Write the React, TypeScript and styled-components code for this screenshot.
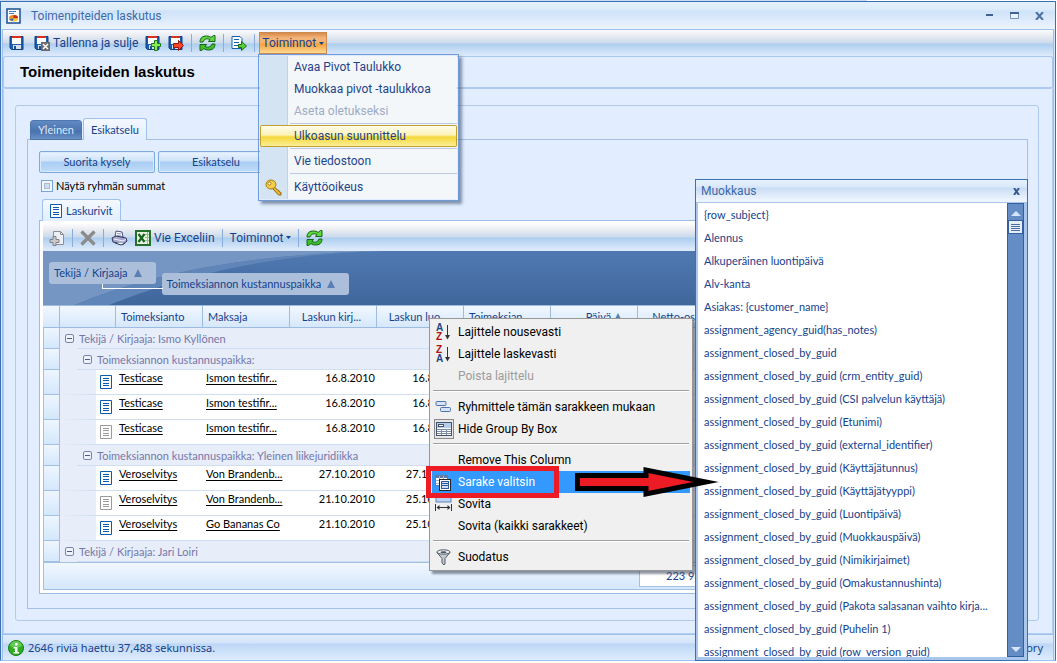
import React from 'react';
import styled, { createGlobalStyle, css } from 'styled-components';

const ui = `Roboto, "Noto Sans", sans-serif`;
const small = `Lato, "DejaVu Sans", sans-serif`;
const navy = '#15428b';

const Global = createGlobalStyle`
  * { box-sizing: border-box; }
  html, body { margin: 0; background: #fff; }
  body { font: 11px/16px ${small}; color: ${navy}; overflow: hidden; }
  button { font: inherit; color: inherit; border: 0; background: none; padding: 0; margin: 0; white-space: nowrap; }
`;

/* ---------- window frame ---------- */

const Desktop = styled.div`
  min-height: 100vh;
  display: flex;
  flex-direction: column;
  padding: 1px 1px 2px 0;
  background: linear-gradient(90deg, #c9dbf0 82%, #fff 82%) 0 0 / 100% 1px no-repeat;
`;

const Frame = styled.div`
  position: relative;
  flex: 1;
  display: flex;
  flex-direction: column;
  border: 1px solid #3b70b2;
  border-bottom-color: #9fc3ee;
  background: #d5e6fb;
`;

const TitleBar = styled.header`
  display: flex;
  align-items: center;
  gap: 10px;
  height: 27px;
  padding: 0 8px 0 5px;
  font: 12px/16px ${ui};
  color: #3e6aaa;
  background: linear-gradient(#e4f1fb 0, #dcebfa 8px, #cfe2f8 9px, #eaf3fe 26px);
`;

const TitleText = styled.span`
  flex: 1;
`;

const WindowButton = styled.button`
  display: flex;
  width: 15px;
  height: 12px;
  align-items: center;
  justify-content: center;
`;

const Shell = styled.div`
  flex: 1;
  display: flex;
  flex-direction: column;
  margin: 0 1px;
  border: 1px solid #9cc0ea;
  border-bottom: 0;
`;

const Bar = styled.div<{ $grid?: boolean }>`
  display: flex;
  align-items: center;
  gap: 7px;
  height: ${p => (p.$grid ? '27px' : '26px')};
  flex-shrink: 0;
  padding: 0 6px;
  font: 12px/16px ${ui};
  background: linear-gradient(#fcfcfd 0, #e8ebf1 6px, #cbdaec 13px, #acceef 14px, #dbe9fb 25px);
`;

const ToolButton = styled.button<{ $label?: boolean }>`
  display: flex;
  align-items: center;
  gap: 3px;
  height: 22px;
  padding-left: ${p => (p.$label ? '2px' : '0')};
`;

const MenuButton = styled.button<{ $open?: boolean }>`
  display: flex;
  align-items: center;
  gap: 3px;
  height: 22px;
  ${p =>
    p.$open &&
    css`
      margin-left: -3px;
      padding: 0 2px;
      border: 1px solid #c98a52;
      background: linear-gradient(#d98a48 0, #f3b47a 5px, #f6b36c 10px, #f5a13e 11px, #fdd994 20px);
    `}
`;

const Divider = styled.span`
  width: 1px;
  height: 18px;
  background: #8aaedb;
`;

const Heading = styled.div`
  height: 33px;
  padding: 0 16px;
  border: 1px solid #a9c8ee;
  border-bottom: 2px solid #adcbf0;
  border-radius: 3px;
  background: #e2eeff;

  h1 {
    margin: 0;
    font: bold 15px/30px "Liberation Sans", Arial, sans-serif;
    color: #000;
  }
`;

const Body = styled.main`
  flex: 1;
  display: flex;
  padding: 16px 13px 12px 11px;
  border: 1px solid #b3cef0;
  border-top: 0;
  background: #e2eeff;
`;

const Section = styled.section`
  flex: 1;
  min-width: 0;
  display: flex;
  flex-direction: column;
  padding: 12px 10px 11px 11px;
  border: 1px solid #b0cbed;
  border-radius: 3px;
`;

const Tabs = styled.div`
  display: flex;
  align-items: flex-end;
  gap: 1px;
  padding-left: 3px;
  margin-bottom: -1px;
  z-index: 1;
`;

const Tab = styled.button<{ $active?: boolean }>`
  display: flex;
  align-items: center;
  gap: 4px;
  padding: 0 7px;
  border: 1px solid #9fc1ea;
  border-radius: 3px 3px 0 0;
  ${p =>
    p.$active
      ? css`
          height: 22px;
          border-bottom: 0;
          background: linear-gradient(#f4f8ff, #e2eeff);
        `
      : css`
          height: 20px;
          color: #dce9fb;
          border-color: #4e77b0;
          background: linear-gradient(#6189c2, #4a72ad 60%, #6b91c6);
        `}
`;

const Pane = styled.div`
  flex: 1;
  display: flex;
  flex-direction: column;
  padding: 11px 11px 14px;
  border: 1px solid #a3c1e8;
`;

const Actions = styled.div`
  display: flex;
  gap: 3px;
`;

const ActionButton = styled.button`
  width: 116px;
  height: 22px;
  border: 1px solid #7faade;
  border-radius: 2px;
  background: linear-gradient(#e9f3fe 0, #cfe3f9 9px, #a9cdf3 10px, #c0dcf8 20px);
  box-shadow: inset 0 0 0 1px #d9eafd;
`;

const Check = styled.label`
  display: flex;
  align-items: center;
  gap: 3px;
  height: 16px;
  margin: 5px 0 5px 2px;
  color: #000;

  input {
    appearance: none;
    width: 12px;
    height: 12px;
    margin: 0;
    border: 1px solid #7ba3d6;
    background: #cfdcf0;
    box-shadow: inset 0 0 0 2px #f2f7fe, inset 0 0 0 3px #a8bcd8;
  }
`;

/* ---------- grid ---------- */

const GridBox = styled.div`
  flex: 1;
  display: flex;
  flex-direction: column;
  padding: 3px;
  border: 1px solid #9cbde8;
  background: #fff;
`;

const GroupPanel = styled.div`
  position: relative;
  display: flex;
  align-items: flex-start;
  gap: 6px;
  height: 54px;
  padding: 11px 6px;
  background: linear-gradient(#5079b2, #40679c);
`;

const Swoosh = styled.svg`
  position: absolute;
  left: 0;
  top: 0;
`;

const Chip = styled.button<{ $nested?: boolean }>`
  position: relative;
  display: flex;
  align-items: center;
  gap: 6px;
  height: 22px;
  padding: 0 14px 0 5px;
  border-radius: 3px;
  background: #abbfdb;
  margin-top: ${p => (p.$nested ? '11px' : '0')};

  ${p =>
    p.$nested &&
    css`
      &::before {
        content: '';
        position: absolute;
        left: -60px;
        top: 11px;
        width: 60px;
        height: 4px;
        border: solid #fff;
        border-width: 0 0 1px 1px;
      }
    `}
`;

const Table = styled.table`
  width: 100%;
  table-layout: fixed;
  border-collapse: separate;
  border-spacing: 0;
`;

const Th = styled.th<{ $right?: boolean }>`
  height: 23px;
  padding: 0 ${p => (p.$right ? '15px' : '5px')} 0 5px;
  border: solid #9ebbe0;
  border-width: 1px 1px 1px 0;
  font-weight: normal;
  text-align: ${p => (p.$right ? 'right' : 'left')};
  white-space: nowrap;
  overflow: hidden;
  text-overflow: ellipsis;
  background: linear-gradient(#f1f7ff, #d6e8fb);
`;

const Selector = styled.td`
  padding: 0;
  border: solid #a3bfe2;
  border-width: 0 1px 1px 1px;
  background: linear-gradient(#eef6ff, #d4e7fb);
`;

const GroupCell = styled.td<{ $level: number }>`
  height: 21px;
  padding: 0 0 0 ${p => (p.$level ? '23px' : '5px')};
  color: #7478ab;
  background: linear-gradient(#cfdff1, #cfdff1) 17px 100% / 100% 1px no-repeat #e7edf9;

  span {
    display: flex;
    align-items: center;
    gap: 5px;
  }
`;

const Cell = styled.td<{ $right?: boolean }>`
  height: 25px;
  padding: 0 ${p => (p.$right ? '2px' : '0')} 0 3px;
  vertical-align: top;
  text-align: ${p => (p.$right ? 'right' : 'left')};
  border-bottom: 1px solid #cfdff1;
  background: #fff;
  color: #000;
  white-space: nowrap;

  a { color: #000; text-underline-offset: 2px; }
`;

const IconCell = styled(Cell)`
  padding: 5px 0 0 4px;
  border-left: 36px solid #e7edf9;
  line-height: 0;
`;

const Footer = styled.div`
  display: flex;
  align-items: center;
  height: 28px;
  border: 1px solid #a3bfe2;
  background: linear-gradient(#f1f7ff, #d4e7fb);
`;

const Total = styled.output`
  width: 87px;
  height: 22px;
  margin-left: 595px;
  padding: 2px 0 0 26px;
  white-space: nowrap;
  border: 1px solid #a3bfe2;
  background: #fff;
`;

const Status = styled.footer`
  display: flex;
  align-items: center;
  gap: 4px;
  height: 26px;
  padding: 0 10px 0 5px;
  font: 11px/16px "Noto Sans", sans-serif;
  border-top: 1px solid #9cc0ea;
  background: linear-gradient(#e1edfc 0, #d3e4f9 8px, #bdd6f5 9px, #dcebfd 24px);

  span:last-child { margin-left: auto; }
`;

/* ---------- floating parts ---------- */

const DropMenu = styled.div`
  position: absolute;
  left: 257px;
  top: 52px;
  width: 201px;
  padding: 1px;
  border: 1px solid #6f9bd9;
  font: 12px/16px ${ui};
  color: #1e4489;
  background: linear-gradient(90deg, #d5e4f3 27px, #c3d2e6 27px, #c3d2e6 28px, #f4f7fa 28px) content-box #fff;
  box-shadow: 3px 3px 3px rgba(60, 80, 110, 0.6);
  z-index: 3;
`;

const DropItem = styled.button<{ $on?: boolean; $tall?: boolean }>`
  display: flex;
  align-items: center;
  width: 100%;
  height: ${p => (p.$tall ? '24px' : '22px')};
  border-radius: 2px;
  &:disabled { color: #9eacc4; }
  ${p =>
    p.$on &&
    css`
      box-shadow: inset 0 0 0 1px #c3a02e;
      background: linear-gradient(#fffdf0 0, #fdf3b8 10px, #f4d838 12px, #fbee98 21px);
    `}
`;

const Slot = styled.span<{ $w: number }>`
  display: flex;
  align-items: center;
  justify-content: center;
  width: ${p => p.$w}px;
  flex-shrink: 0;
`;

const DropLine = styled.hr`
  height: 1px;
  margin: 1px 0 1px 30px;
  border: 0;
  background: #bccbe0;
`;

const ContextMenu = styled.div`
  position: absolute;
  left: 428px;
  top: 316px;
  width: 264px;
  padding: 2px;
  border: 1px solid #979797;
  font: 12px/16px ${ui};
  color: #000;
  background: #f0f0f0;
  box-shadow: 3px 3px 2px rgba(70, 80, 100, 0.6);
  z-index: 3;
`;

const ContextItem = styled.button<{ $on?: boolean }>`
  display: flex;
  align-items: center;
  gap: 3px;
  width: 100%;
  height: 22px;
  &:disabled { color: #9c9c9c; }
  ${p => p.$on && css` color: #fff; background: #3399ff; `}
`;

const ContextLine = styled.hr`
  height: 2px;
  margin: 3px 1px 4px;
  border: solid;
  border-width: 1px 0;
  border-color: #a0a0a0 #fff #fff;
`;

const Callout = styled.div`
  position: absolute;
  left: 425px;
  top: 464px;
  width: 133px;
  height: 32px;
  border: 5px solid #ed1c24;
  pointer-events: none;
  z-index: 5;
`;

const Arrow = styled.svg`
  position: absolute;
  left: 572px;
  top: 463px;
  z-index: 6;
  pointer-events: none;
`;

const Palette = styled.aside`
  position: absolute;
  right: 27px;
  top: 177px;
  bottom: -1px;
  width: 333px;
  display: flex;
  flex-direction: column;
  border: 1px solid #3b70b2;
  background: #a9c6ec;
  z-index: 4;
`;

const PaletteTitle = styled.div`
  display: flex;
  align-items: center;
  justify-content: space-between;
  height: 22px;
  flex-shrink: 0;
  padding: 0 7px 0 5px;
  font: 12px/16px ${ui};
  color: #3e6aaa;
  background: linear-gradient(#e6f2fc 0, #d9e8f9 7px, #c9ddf5 8px, #ecf4fe 20px);
`;

const PaletteBody = styled.div`
  flex: 1;
  min-height: 0;
  display: flex;
  margin: 1px 3px 3px 2px;
  background: #fff;
`;

const Fields = styled.ul`
  flex: 1;
  min-width: 0;
  height: 100%;
  margin: 0;
  padding: 4px 6px 0;
  list-style: none;
  overflow: hidden;

  li {
    height: 23px;
    line-height: 15px;
    white-space: nowrap;
  }
`;

const Scroll = styled.div`
  display: flex;
  flex-direction: column;
  align-items: center;
  width: 17px;
  border: 1px solid #34609f;
  background: #648dc6;

  button { height: 16px; }
  i {
    width: 15px;
    height: 14px;
    margin-bottom: auto;
    border: 1px solid #34609f;
    background: repeating-linear-gradient(#4b6f9f 0 1px, #e8eef6 1px 2px) center / 9px 7px no-repeat #e8eef6;
  }
`;

/* ---------- icons ---------- */

const Floppy = ({ children }: { children?: React.ReactNode }) => (
  <svg width="16" height="16" viewBox="0 0 16 16">
    <path d="M1 1.500h13v13H2.500L1 13z" fill="#1d5fae" stroke="#0d3f86" />
    <rect x="3" y="1" width="9" height="8" fill="#fff" />
    <rect x="3" y="1" width="9" height="2" fill="#d8321e" />
    <rect x="4" y="10" width="8" height="4" fill="#d7dfe8" />
    <rect x="5" y="11" width="2" height="3" fill="#1d4f93" />
    {children}
  </svg>
);
const CloseMark = () => (
  <g>
    <rect x="7" y="7" width="9" height="9" fill="#6c6c6c" />
    <path d="M9 9l5 5M14 9l-5 5" stroke="#fff" strokeWidth="1.6" />
  </g>
);
const PlusMark = () => (
  <path d="M9.500 5.500h3v3h3v3h-3v4h-3v-4h-3v-3h3z" fill="#8ae95a" stroke="#1c7a16" />
);
const ArrowMark = () => (
  <path d="M5.500 8.500h5v-3l5 5-5 5v-3h-5z" fill="#f4472c" stroke="#9c1408" />
);
const Refresh = () => (
  <svg width="17" height="16" viewBox="0 0 17 16">
    <path d="M1 7C1 2.500 4 1 7.500 1c2 0 3.500.5 4.500 1.500L14.500.5h1.500v6H9.500l1.500-2C8 3 5 4 4 7z" fill="#5fd63c" stroke="#14641a" />
    <path d="M16 9c0 4.500-3 6-6.500 6-2 0-3.500-.5-4.500-1.500L2.500 15.500H1v-6h6.500l-1.500 2c3 1.500 6 .5 7-2.500z" fill="#3fbf28" stroke="#14641a" />
  </svg>
);
const Doc = ({ color = '#0d5aae' }: { color?: string }) => (
  <svg width="12" height="14" viewBox="0 0 12 14">
    <path d="M.5.5h11v13H.5z" fill="#fff" stroke={color} />
    <path d="M3 3.500h6M3 5.500h6M3 8.500h6M3 10.500h6" stroke={color} />
  </svg>
);
const Export = () => (
  <svg width="16" height="16" viewBox="0 0 16 16">
    <path d="M1 1.500h8l2 2v10H1z" fill="#fff" stroke="#1560ad" />
    <path d="M3 4.500h5M3 7.500h5M3 10.500h4" stroke="#1560ad" />
    <path d="M7.500 9.500h3v-3l5 4.500-5 4.500v-3h-3z" fill="#57cf35" stroke="#176a12" />
  </svg>
);
const AppIcon = () => (
  <svg width="15" height="16" viewBox="0 0 15 16">
    <path d="M1 1h13v14H1z" fill="#fff" stroke="#1d4f8f" strokeWidth="1.5" />
    <path d="M3 3.500h7M3 5.500h5" stroke="#4a7fbd" />
    <ellipse cx="7.500" cy="10" rx="4.500" ry="3" fill="#f08c1c" />
    <path d="M7.500 10V7a4.500 3 0 0 1 4.500 3z" fill="#c62a1a" />
    <path d="M3 10.500a4.500 3 0 0 0 9 0z" fill="#f8c73a" />
    <path d="M3 11.500a4.500 2.500 0 0 0 4 1.500l.5-3z" fill="#3d6fb8" />
  </svg>
);
const NewGrey = () => (
  <svg width="16" height="16" viewBox="0 0 16 16">
    <path d="M4.500 1.500h7l3 3v10h-10z" fill="#eceff3" stroke="#8c9096" />
    <path d="M11.500 1.500v3h3" fill="none" stroke="#8c9096" />
    <path d="M4 6.500h3v3h3v3H7v3H4v-3H1v-3h3z" fill="#c8cacd" stroke="#808387" />
  </svg>
);
const CrossGrey = () => (
  <svg width="16" height="16" viewBox="0 0 16 16">
    <path d="M1.500 1.500l13 13M14.500 1.500l-13 13" stroke="#8b8b8b" strokeWidth="3.200" />
  </svg>
);
const Printer = () => (
  <svg width="17" height="16" viewBox="0 0 17 16">
    <path d="M4 7l1-6 6 1 1 5z" fill="#fff" stroke="#4b4f80" />
    <path d="M6 3.500l4 .5M6 5.500l4 .5" stroke="#8a8fc0" />
    <path d="M1 8l4-2 10 2 1 3-4 3.500L2 12z" fill="#a5a9cf" stroke="#33365f" />
    <path d="M3 9l9 2 3-2" fill="none" stroke="#f0f1fb" />
    <path d="M4 13l6 2 4-2" fill="#fff" stroke="#33365f" />
  </svg>
);
const Excel = () => (
  <svg width="16" height="16" viewBox="0 0 16 16">
    <rect x="1" y="1" width="14" height="14" fill="#e7f3df" stroke="#23702a" strokeWidth="2" />
    <path d="M10 4.500h4M10 7.500h4M10 10.500h4M12.500 2v12" stroke="#8fc08a" />
    <path d="M3.500 4l6 8M9.500 4l-6 8" stroke="#17651f" strokeWidth="2.200" />
  </svg>
);
const Key = () => (
  <svg width="17" height="17" viewBox="0 0 17 17">
    <path d="M7.500 9.500l6 6.500h2.500v-2.500l-1.500-.5-.5-1.500-1.500-.5L9.500 8z" fill="#eab62a" stroke="#8f6a10" />
    <ellipse cx="6" cy="5.500" rx="5" ry="4.500" fill="#f6cf4a" stroke="#a67b12" />
    <circle cx="4.500" cy="4.500" r="1.500" fill="#fff" stroke="#a67b12" />
  </svg>
);
const Sort = ({ top, bottom, a, b }: { top: string; bottom: string; a: string; b: string }) => (
  <svg width="17" height="18" viewBox="0 0 17 18" fontFamily="Liberation Sans, sans-serif" fontWeight="bold" fontSize="10">
    <text x="1" y="8" fill={a}>{top}</text>
    <text x="1" y="17" fill={b}>{bottom}</text>
    <path d="M12.500 2v13" stroke="#333" />
    <path d="M10 12h5l-2.500 4.500z" fill="#333" />
  </svg>
);
const GroupIcon = () => (
  <svg width="17" height="14" viewBox="0 0 17 14">
    <rect x="1" y="1.500" width="10" height="4" rx="1" fill="#d6e4f5" stroke="#4f75a8" />
    <rect x="5.500" y="7.500" width="10" height="4" rx="1" fill="#d6e4f5" stroke="#4f75a8" />
  </svg>
);
const BoxIcon = () => (
  <svg width="20" height="20" viewBox="0 0 20 20">
    <rect x=".5" y=".5" width="19" height="19" fill="#e6e6e6" stroke="#8a8a8a" />
    <rect x="2.500" y="3.500" width="15" height="13" fill="#fff" stroke="#44546e" />
    <rect x="3" y="4" width="14" height="5" fill="#b8cdea" />
    <rect x="4.500" y="5.500" width="5" height="2" fill="#fff" stroke="#44546e" />
    <path d="M3 10.500h14M3 12.500h14M3 14.500h14M7.500 10v6M12.500 10v6" stroke="#7d8ca6" />
  </svg>
);
const ChooserIcon = () => (
  <svg width="17" height="17" viewBox="0 0 17 17">
    <rect x=".5" y="1.500" width="12" height="10" fill="#fff" stroke="#5f7ba3" />
    <path d="M1 3h12" stroke="#5f7ba3" strokeWidth="2" />
    <path d="M1 6.500h12M1 9.500h12M4.500 2v9M8.500 2v9" stroke="#9db3d2" />
    <rect x="4.500" y="5.500" width="11" height="11" fill="#fff" stroke="#222" />
    <rect x="6.500" y="7.500" width="7" height="7" fill="#cfe0f5" stroke="#2e5c9c" />
    <path d="M7 9.500h6M7 11.500h6" stroke="#2e5c9c" />
  </svg>
);
const FitIcon = () => (
  <svg width="17" height="16" viewBox="0 0 17 16">
    <rect x="1" y="1" width="15" height="5" fill="#bcd2f0" stroke="#5f86bd" />
    <path d="M.5 8v7M16.500 8v7M2 11.500h13" stroke="#333" />
    <path d="M1.500 11.500l3-2.500v5zM15.500 11.500l-3-2.500v5z" fill="#333" />
  </svg>
);
const FilterIcon = () => (
  <svg width="15" height="17" viewBox="0 0 15 17">
    <path d="M1 3.500l5 6v4.500l2 2 1-1V9.500l5-6z" fill="#c3cad3" stroke="#555d66" />
    <ellipse cx="7.500" cy="3" rx="6.500" ry="2.200" fill="#eef1f5" stroke="#555d66" />
    <ellipse cx="7.500" cy="3.200" rx="3" ry="1" fill="#4b535c" />
  </svg>
);
const Minus = () => (
  <svg width="9" height="9" viewBox="0 0 9 9">
    <rect x=".5" y=".5" width="8" height="8" rx="1.500" fill="#eef2fa" stroke="#7a86a8" />
    <path d="M2 4.500h5" stroke="#4f5b85" />
  </svg>
);
const Up = () => (
  <svg width="8" height="8" viewBox="0 0 8 8"><path d="M4 0l4 8H0z" fill="#5b7fb4" /></svg>
);
const Down = () => (
  <svg width="5" height="3" viewBox="0 0 5 3"><path d="M0 0h5L2.500 3z" fill={navy} /></svg>
);
const ScrollArrow = ({ flip }: { flip?: boolean }) => (
  <svg width="10" height="5" viewBox="0 0 10 5"><path d={flip ? 'M0 0h10L5 5z' : 'M0 5h10L5 0z'} fill="#d7e6fa" /></svg>
);
const Info = () => (
  <svg width="16" height="16" viewBox="0 0 16 16">
    <circle cx="8" cy="8" r="7.500" fill="#2fae22" stroke="#15800f" />
    <path d="M2 6a6 5 0 0 1 12 0q-6 3-12 0z" fill="#7bd66c" opacity=".7" />
    <rect x="7" y="3" width="2.500" height="2.500" fill="#fff" />
    <path d="M5.500 7h4v5h1.500v1.500H5.500V12H7V8.500H5.500z" fill="#fff" />
  </svg>
);

/* ---------- data ---------- */

type Entry =
  | { kind: 'group'; level: number; text: string }
  | { kind: 'row'; dim?: boolean; task: string; payer: string; sent: string; made: string };

const entries: Entry[] = [
  { kind: 'group', level: 0, text: 'Tekijä / Kirjaaja: Ismo Kyllönen' },
  { kind: 'group', level: 1, text: 'Toimeksiannon kustannuspaikka:' },
  { kind: 'row', task: 'Testicase', payer: 'Ismon testifir...', sent: '16.8.2010', made: '16.8.2010' },
  { kind: 'row', task: 'Testicase', payer: 'Ismon testifir...', sent: '16.8.2010', made: '16.8.2010' },
  { kind: 'row', dim: true, task: 'Testicase', payer: 'Ismon testifir...', sent: '16.8.2010', made: '16.8.2010' },
  { kind: 'group', level: 1, text: 'Toimeksiannon kustannuspaikka: Yleinen liikejuridiikka' },
  { kind: 'row', task: 'Veroselvitys', payer: 'Von Brandenb...', sent: '27.10.2010', made: '27.10.2010' },
  { kind: 'row', dim: true, task: 'Veroselvitys', payer: 'Von Brandenb...', sent: '21.10.2010', made: '25.10.2010' },
  { kind: 'row', task: 'Veroselvitys', payer: 'Go Bananas Co', sent: '21.10.2010', made: '25.10.2010' },
  { kind: 'group', level: 0, text: 'Tekijä / Kirjaaja: Jari Loiri' },
];

const fields = [
  '{row_subject}', 'Alennus', 'Alkuperäinen luontipäivä', 'Alv-kanta', 'Asiakas: {customer_name}',
  'assignment_agency_guid(has_notes)', 'assignment_closed_by_guid',
  ...['crm_entity_guid', 'CSI palvelun käyttäjä', 'Etunimi', 'external_identifier', 'Käyttäjätunnus',
    'Käyttäjätyyppi', 'Luontipäivä', 'Muokkauspäivä', 'Nimikirjaimet', 'Omakustannushinta',
  ].map(n => `assignment_closed_by_guid (${n})`),
  'assignment_closed_by_guid (Pakota salasanan vaihto kirja...',
  'assignment_closed_by_guid (Puhelin 1)',
  'assignment_closed_by_guid (row_version_guid)',
];

const blue = '#1c4587';
const red = '#b01116';

export default function App() {
  return (
    <Desktop>
      <Global />
      <Frame>
        <TitleBar>
          <AppIcon />
          <TitleText>Toimenpiteiden laskutus</TitleText>
          <WindowButton aria-label="Pienennä">
            <svg width="7" height="3"><path d="M0 1h7" stroke="#3e6296" strokeWidth="2" /></svg>
          </WindowButton>
          <WindowButton aria-label="Suurenna">
            <svg width="9" height="8"><path d="M.5.5h8v6h-8z" fill="#eaf3fe" stroke="#7593be" /><path d="M0 1h9" stroke="#3e6296" strokeWidth="2" /></svg>
          </WindowButton>
          <WindowButton aria-label="Sulje">
            <svg width="9" height="8"><path d="M1 0l7 8M8 0L1 8" stroke="#4c6fa3" strokeWidth="2" /></svg>
          </WindowButton>
        </TitleBar>

        <Shell>
          <Bar role="toolbar">
            <ToolButton aria-label="Tallenna"><Floppy /></ToolButton>
            <ToolButton $label><Floppy><CloseMark /></Floppy>Tallenna ja sulje</ToolButton>
            <ToolButton aria-label="Tallenna ja uusi"><Floppy><PlusMark /></Floppy></ToolButton>
            <ToolButton aria-label="Tallenna ja jatka"><Floppy><ArrowMark /></Floppy></ToolButton>
            <Divider />
            <ToolButton aria-label="Päivitä"><Refresh /></ToolButton>
            <Divider />
            <ToolButton aria-label="Vie"><Export /></ToolButton>
            <Divider />
            <MenuButton $open>Toiminnot<Down /></MenuButton>
          </Bar>

          <Heading><h1>Toimenpiteiden laskutus</h1></Heading>

          <Body>
            <Section>
              <Tabs>
                <Tab>Yleinen</Tab>
                <Tab $active>Esikatselu</Tab>
              </Tabs>
              <Pane>
                <Actions>
                  <ActionButton>Suorita kysely</ActionButton>
                  <ActionButton>Esikatselu</ActionButton>
                </Actions>
                <Check><input type="checkbox" />Näytä ryhmän summat</Check>
                <Tabs>
                  <Tab $active><Doc />Laskurivit</Tab>
                </Tabs>
                <GridBox>
                  <Bar role="toolbar" $grid>
                    <ToolButton aria-label="Uusi"><NewGrey /></ToolButton>
                    <Divider />
                    <ToolButton aria-label="Poista"><CrossGrey /></ToolButton>
                    <Divider />
                    <ToolButton aria-label="Tulosta"><Printer /></ToolButton>
                    <ToolButton><Excel />Vie Exceliin</ToolButton>
                    <Divider />
                    <MenuButton>Toiminnot<Down /></MenuButton>
                    <Divider />
                    <ToolButton aria-label="Päivitä rivit"><Refresh /></ToolButton>
                  </Bar>
                  <GroupPanel>
                    <Swoosh width="340" height="54" viewBox="0 0 340 54">
                      <path d="M0 0h340Q150 4 32 54H0z" fill="#7596c3" />
                      <path d="M340 0Q150 4 32 54h34Q190 4 340 0z" fill="#6085b9" />
                    </Swoosh>
                    <Chip>Tekijä / Kirjaaja<Up /></Chip>
                    <Chip $nested>Toimeksiannon kustannuspaikka<Up /></Chip>
                  </GroupPanel>
                  <Table>
                    <colgroup>
                      <col style={{ width: 17 }} />
                      <col style={{ width: 56 }} />
                      {[0, 1, 2, 3, 4, 5, 6].map(i => <col key={i} style={{ width: 87 }} />)}
                      <col />
                    </colgroup>
                    <thead>
                      <tr>
                        <Th /><Th />
                        <Th>Toimeksianto</Th>
                        <Th>Maksaja</Th>
                        <Th $right>Laskun kirj...</Th>
                        <Th $right>Laskun luo...</Th>
                        <Th>Toimeksian...</Th>
                        <Th $right>Päivä <Up /></Th>
                        <Th $right>Netto-osu...</Th>
                        <Th />
                      </tr>
                    </thead>
                    <tbody>
                      {entries.map((e, i) =>
                        e.kind === 'group' ? (
                          <tr key={i}>
                            <Selector />
                            <GroupCell $level={e.level} colSpan={9}><span><Minus />{e.text}</span></GroupCell>
                          </tr>
                        ) : (
                          <tr key={i}>
                            <Selector />
                            <IconCell><Doc color={e.dim ? '#9a9a9a' : undefined} /></IconCell>
                            <Cell><a href="#task">{e.task}</a></Cell>
                            <Cell><a href="#payer">{e.payer}</a></Cell>
                            <Cell $right>{e.sent}</Cell>
                            <Cell $right>{e.made}</Cell>
                            <Cell colSpan={4} />
                          </tr>
                        ),
                      )}
                    </tbody>
                  </Table>
                  <Footer><Total>223 937</Total></Footer>
                </GridBox>
              </Pane>
            </Section>
          </Body>

          <Status>
            <Info />
            <span>2646 riviä haettu 37,488 sekunnissa.</span>
            <span>History</span>
          </Status>
        </Shell>

        <DropMenu role="menu">
          <DropItem><Slot $w={34} />Avaa Pivot Taulukko</DropItem>
          <DropItem><Slot $w={34} />Muokkaa pivot -taulukkoa</DropItem>
          <DropItem disabled><Slot $w={34} />Aseta oletukseksi</DropItem>
          <DropLine />
          <DropItem $on><Slot $w={34} />Ulkoasun suunnittelu</DropItem>
          <DropLine />
          <DropItem><Slot $w={34} />Vie tiedostoon</DropItem>
          <DropLine />
          <DropItem $tall><Slot $w={26}><Key /></Slot><Slot $w={8} />Käyttöoikeus</DropItem>
        </DropMenu>

        <ContextMenu role="menu">
          <ContextItem><Slot $w={23}><Sort top="A" bottom="Z" a={blue} b={red} /></Slot>Lajittele nousevasti</ContextItem>
          <ContextItem><Slot $w={23}><Sort top="Z" bottom="A" a={red} b={blue} /></Slot>Lajittele laskevasti</ContextItem>
          <ContextItem disabled><Slot $w={23} />Poista lajittelu</ContextItem>
          <ContextLine />
          <ContextItem><Slot $w={23}><GroupIcon /></Slot>Ryhmittele tämän sarakkeen mukaan</ContextItem>
          <ContextItem><Slot $w={23}><BoxIcon /></Slot>Hide Group By Box</ContextItem>
          <ContextLine />
          <ContextItem><Slot $w={23} />Remove This Column</ContextItem>
          <ContextItem $on><Slot $w={23}><ChooserIcon /></Slot>Sarake valitsin</ContextItem>
          <ContextItem><Slot $w={23}><FitIcon /></Slot>Sovita</ContextItem>
          <ContextItem><Slot $w={23} />Sovita (kaikki sarakkeet)</ContextItem>
          <ContextLine />
          <ContextItem><Slot $w={23}><FilterIcon /></Slot>Suodatus</ContextItem>
        </ContextMenu>

        <Callout />
        <Arrow width="148" height="34" viewBox="0 0 148 34">
          <path d="M4.500 10.500H73V5L133 17 73 29V23.500H4.500z" fill="#ed1c24" stroke="#000" strokeWidth="5" strokeMiterlimit="10" />
        </Arrow>

        <Palette>
          <PaletteTitle>
            Muokkaus
            <button aria-label="Sulje valitsin">
              <svg width="7" height="7" style={{ display: 'block' }}><path d="M1 0l5 7M6 0L1 7" stroke="#35598f" strokeWidth="2" /></svg>
            </button>
          </PaletteTitle>
          <PaletteBody>
            <Fields>
              {fields.map(f => <li key={f}>{f}</li>)}
            </Fields>
            <Scroll>
              <button aria-label="Ylös"><ScrollArrow /></button>
              <i />
              <button aria-label="Alas"><ScrollArrow flip /></button>
            </Scroll>
          </PaletteBody>
        </Palette>
      </Frame>
    </Desktop>
  );
}
